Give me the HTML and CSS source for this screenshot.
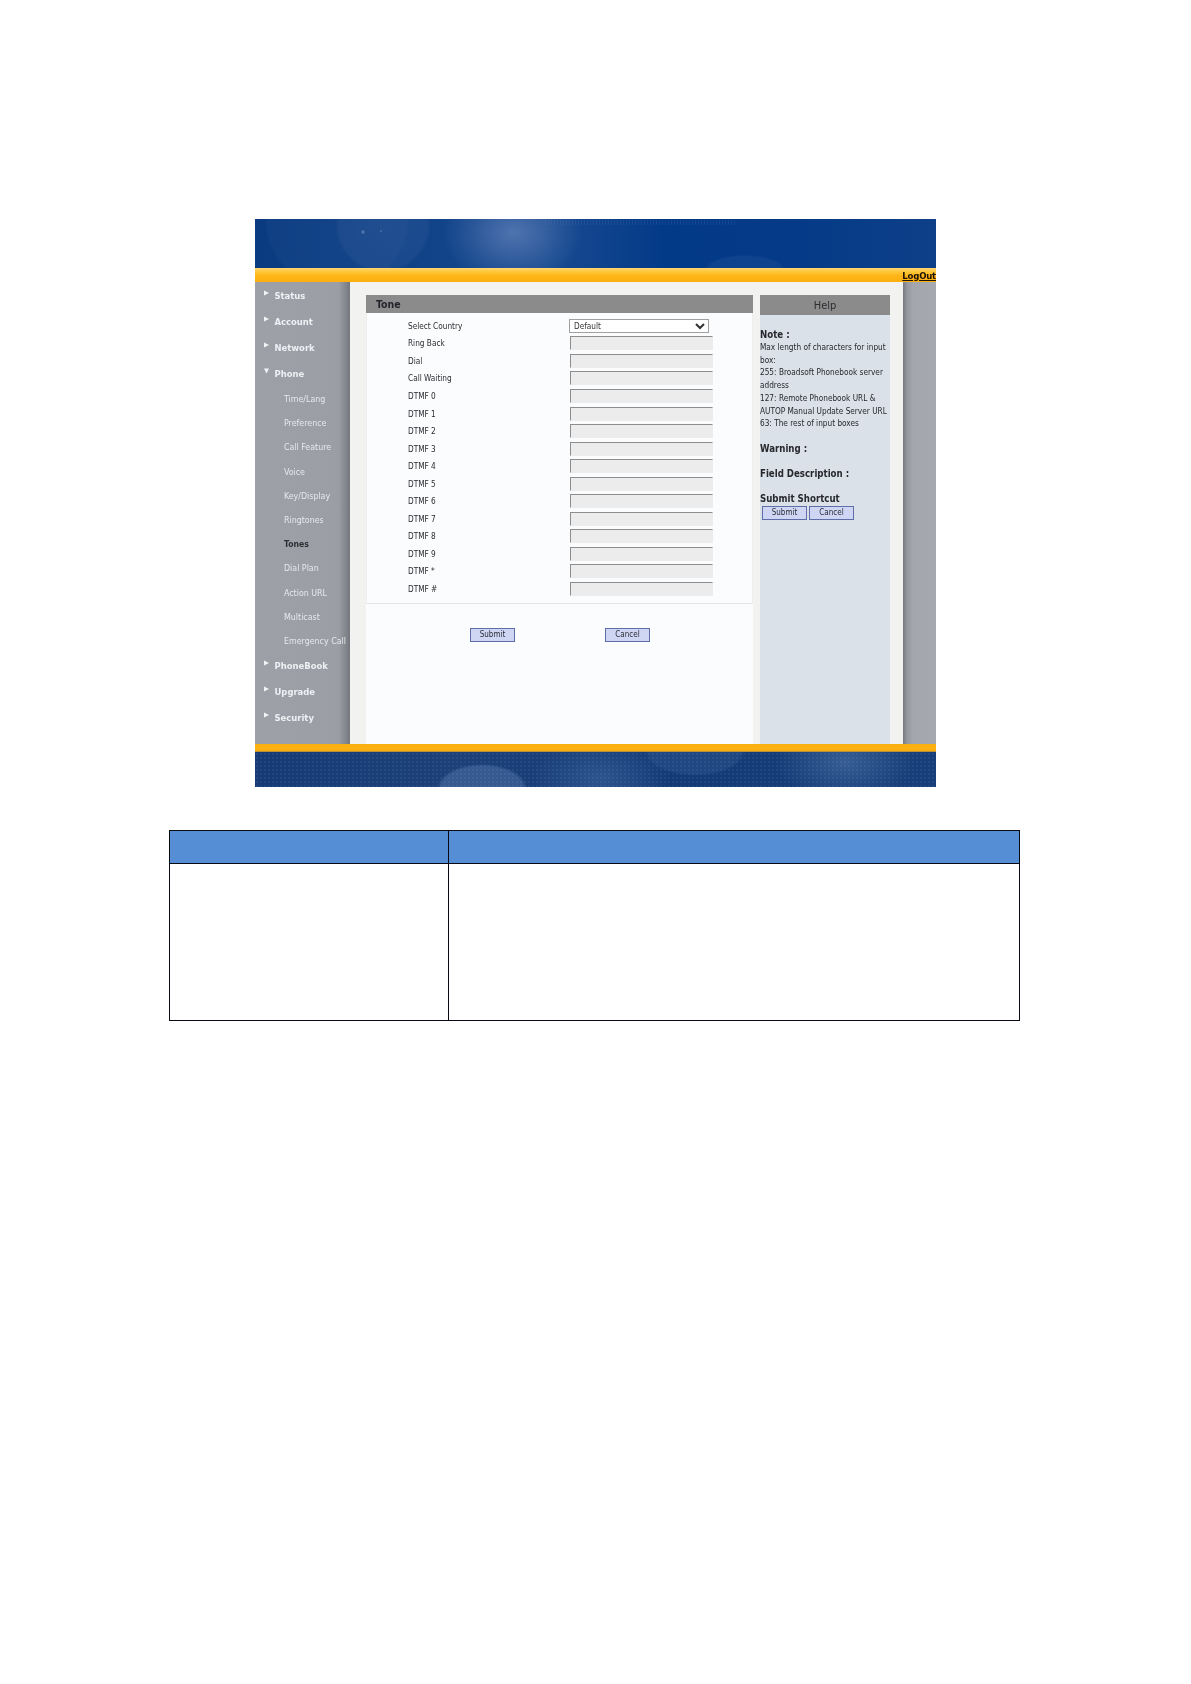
FILE: index.html
```html
<!DOCTYPE html>
<html lang="en">
<head>
<meta charset="utf-8">
<title>Tone</title>
<link rel="stylesheet" href="styles.css">
</head>
<body>
<div class="shot">
  <div class="banner"></div>
  <div class="bar"><a class="logout">LogOut</a></div>
  <div class="main">
    <nav class="side">
      <div class="top"><svg class="tri" viewBox="0 0 6 6"><path d="M0 0L6 3L0 6Z"/></svg>Status</div>
      <div class="top"><svg class="tri" viewBox="0 0 6 6"><path d="M0 0L6 3L0 6Z"/></svg>Account</div>
      <div class="top"><svg class="tri" viewBox="0 0 6 6"><path d="M0 0L6 3L0 6Z"/></svg>Network</div>
      <div class="top"><svg class="tri" viewBox="0 0 6 6"><path d="M0 0L6 0L3 6Z"/></svg>Phone</div>
      <div class="sub">Time/Lang</div>
      <div class="sub">Preference</div>
      <div class="sub">Call Feature</div>
      <div class="sub">Voice</div>
      <div class="sub">Key/Display</div>
      <div class="sub">Ringtones</div>
      <div class="sub current">Tones</div>
      <div class="sub">Dial Plan</div>
      <div class="sub">Action URL</div>
      <div class="sub">Multicast</div>
      <div class="sub">Emergency Call</div>
      <div class="top"><svg class="tri" viewBox="0 0 6 6"><path d="M0 0L6 3L0 6Z"/></svg>PhoneBook</div>
      <div class="top"><svg class="tri" viewBox="0 0 6 6"><path d="M0 0L6 3L0 6Z"/></svg>Upgrade</div>
      <div class="top"><svg class="tri" viewBox="0 0 6 6"><path d="M0 0L6 3L0 6Z"/></svg>Security</div>
    </nav>
    <section class="content">
      <div class="panel">
        <h2 class="title">Tone</h2>
        <div class="rows">
          <div class="row"><span>Select Country</span><select class="sel"><option>Default</option></select></div>
          <div class="row"><span>Ring Back</span><input class="field" readonly></div>
          <div class="row"><span>Dial</span><input class="field" readonly></div>
          <div class="row"><span>Call Waiting</span><input class="field" readonly></div>
          <div class="row"><span>DTMF 0</span><input class="field" readonly></div>
          <div class="row"><span>DTMF 1</span><input class="field" readonly></div>
          <div class="row"><span>DTMF 2</span><input class="field" readonly></div>
          <div class="row"><span>DTMF 3</span><input class="field" readonly></div>
          <div class="row"><span>DTMF 4</span><input class="field" readonly></div>
          <div class="row"><span>DTMF 5</span><input class="field" readonly></div>
          <div class="row"><span>DTMF 6</span><input class="field" readonly></div>
          <div class="row"><span>DTMF 7</span><input class="field" readonly></div>
          <div class="row"><span>DTMF 8</span><input class="field" readonly></div>
          <div class="row"><span>DTMF 9</span><input class="field" readonly></div>
          <div class="row"><span>DTMF *</span><input class="field" readonly></div>
          <div class="row"><span>DTMF #</span><input class="field" readonly></div>
        </div>
        <div class="actions">
          <button class="btn">Submit</button>
          <button class="btn">Cancel</button>
        </div>
      </div>
      <aside class="help">
        <div class="help-title">Help</div>
        <h3 class="note">Note :</h3>
        <p class="note-text">Max length of characters for input<br>box:<br>255: Broadsoft Phonebook server<br>address<br>127: Remote Phonebook URL &amp;<br>AUTOP Manual Update Server URL<br>63: The rest of input boxes</p>
        <h3 class="warn">Warning :</h3>
        <h3 class="desc">Field Description :</h3>
        <h3 class="short">Submit Shortcut</h3>
        <div class="short-btns">
          <button class="btn">Submit</button>
          <button class="btn">Cancel</button>
        </div>
      </aside>
    </section>
    <div class="strip"></div>
  </div>
  <div class="bar-low"></div>
  <div class="foot"></div>
</div>
<table class="tbl">
  <thead><tr><th class="c1"></th><th></th></tr></thead>
  <tbody><tr><td></td><td></td></tr></tbody>
</table>
</body>
</html>
```
FILE: styles.css
```css
* { box-sizing: border-box; }
html, body { margin: 0; background: #fff; }
body { padding-top: 219px; font-family: "DejaVu Sans", sans-serif; color: #222; }

.shot { width: 681px; margin-left: 255px; filter: blur(0.35px); }

.banner {
  height: 49px;
  background:
    radial-gradient(circle 2.5px at 108px 13px, rgba(170,190,225,.5), transparent),
    radial-gradient(circle 1.5px at 126px 12px, rgba(170,190,225,.4), transparent),
    radial-gradient(ellipse 70px 52px at 258px 14px, rgba(125,150,200,.55), rgba(85,120,180,.28) 65%, transparent),
    radial-gradient(circle 48px at 128px 6px, rgba(100,130,180,.16), rgba(100,130,180,.12) 92%, transparent),
    radial-gradient(circle 72px at 82px 0, rgba(70,105,165,.1) 97%, transparent),
    repeating-linear-gradient(90deg, rgba(150,175,220,.1) 0 1px, transparent 1px 3px) 290px 1px / 190px 5px no-repeat,
    radial-gradient(ellipse 40px 14px at 490px 50px, rgba(60,100,160,.2) 90%, transparent),
    linear-gradient(90deg, #0a3a80 0, #0e4086 20%, #1a4b90 42%, #033a88 60%, #043a87 80%, #0e4088 100%);
}

.bar {
  height: 14px;
  display: flex;
  justify-content: flex-end;
  align-items: flex-end;
  background: linear-gradient(#ffd773 0, #ffc536 28%, #fdb414 60%, #fcb010 100%);
}
.logout {
  font-size: 9.5px;
  font-weight: 700;
  line-height: 12px;
  letter-spacing: -.2px;
  color: #1d1206;
  text-decoration: underline;
  font-stretch: condensed;
}

.main { display: flex; height: 462px; }

.side {
  width: 95px;
  flex: none;
  padding-top: 1px;
  background: linear-gradient(90deg, #9da0a6 0, #9b9ea5 88%, #7e8187 97%, #74777d 100%);
  color: #eef0f3;
  font-stretch: condensed;
}
.top {
  position: relative;
  height: 26px;
  padding-left: 19.5px;
  line-height: 26px;
  font-size: 9.4px;
  font-weight: 700;
  white-space: nowrap;
}
.tri {
  position: absolute;
  left: 9px;
  top: 7px;
  width: 5px;
  height: 6px;
  fill: #f2f3f5;
}
.sub {
  height: 24.2px;
  padding-left: 29px;
  line-height: 24.2px;
  font-size: 8.8px;
  white-space: nowrap;
  color: #e6e8ec;
}
.sub.current { color: #2e2f33; font-weight: 700; font-size: 8.6px; }

.content {
  width: 553px;
  flex: none;
  display: flex;
  gap: 7px;
  padding: 13px 13px 0 16px;
  background: #f2f2f0;
}
.panel { width: 387px; flex: none; background: #fbfcfe; }
.title {
  margin: 0;
  height: 18px;
  padding-left: 10px;
  background: #8b8b8b;
  color: #23252b;
  font-size: 10.5px;
  font-weight: 700;
  line-height: 18px;
  font-stretch: condensed;
}
.rows {
  padding: 4px 0 5px;
  border-bottom: 1px solid #e4e5e6;
  border-left: 1px solid #eee;
  border-right: 1px solid #eee;
}
.row {
  display: grid;
  grid-template-columns: 162px 143px;
  align-items: center;
  height: 17.55px;
  padding-left: 41px;
  font-size: 8.2px;
  font-stretch: condensed;
  color: #2a2c30;
}
.sel {
  width: 140px;
  height: 14px;
  margin-left: -1px;
  padding: 0;
  border: 1px solid #a0a0a0;
  border-radius: 0;
  background: #fff;
  font-family: "DejaVu Sans", sans-serif;
  font-size: 8.2px;
  font-stretch: condensed;
  color: #333;
}
.field {
  display: block;
  width: 143px;
  height: 14px;
  padding: 0;
  border: 1px solid #ececec;
  border-top: 1.5px solid #8d8d8d;
  border-left: 1px solid #8d8d8d;
  background: #ececec;
  outline: none;
}
.actions {
  display: flex;
  gap: 90px;
  padding: 24px 0 0 104px;
}
.btn {
  width: 45px;
  height: 14px;
  padding: 0;
  border: 1px solid #5f6ea8;
  border-radius: 0;
  background: #ced6f4;
  font-family: "DejaVu Sans", sans-serif;
  font-size: 8px;
  font-stretch: condensed;
  line-height: 12px;
  color: #2a2c34;
}

.help {
  width: 130px;
  flex: none;
  background: #dae1e8;
  color: #26282d;
  font-stretch: condensed;
}
.help-title {
  height: 20px;
  background: #8b8b8b;
  text-align: center;
  font-size: 11px;
  line-height: 22px;
  color: #2c2d30;
}
.help h3 { margin: 0; font-size: 9.6px; font-weight: 700; line-height: 13px; white-space: nowrap; }
.note { padding-top: 13px; }
.note-text {
  margin: 0;
  font-size: 8.2px;
  line-height: 12.7px;
  white-space: nowrap;
}
.help .warn { padding-top: 12px; }
.help .desc { padding-top: 12px; }
.help .short { padding-top: 12px; }
.short-btns { display: flex; gap: 2px; padding: 1px 0 0 2px; }

.strip {
  flex: 1;
  background: linear-gradient(90deg, #77797e 0, #94979d 12%, #a3a6ac 30%, #a6a9af 100%);
}

.bar-low {
  height: 8px;
  background: linear-gradient(#fdb110 0, #fdb110 80%, #9d8540 100%);
}
.foot {
  height: 35px;
  background:
    radial-gradient(circle 1.5px, rgba(190,210,240,.07) 50%, transparent) 0 0 / 4px 4px,
    radial-gradient(ellipse 45px 24px at 227px 36px, rgba(110,145,195,.32) 90%, transparent),
    radial-gradient(ellipse 50px 24px at 440px 0, rgba(80,115,170,.22) 90%, transparent),
    radial-gradient(ellipse 70px 40px at 345px 26px, rgba(90,130,185,.35), transparent),
    radial-gradient(ellipse 70px 40px at 590px 10px, rgba(110,145,195,.38), transparent),
    linear-gradient(90deg, #163b74 0, #1d4079 30%, #123a75 60%, #173e78 100%);
}

.tbl {
  width: 851px;
  margin: 43px 0 0 169px;
  border-collapse: collapse;
  table-layout: fixed;
}
.tbl th, .tbl td { padding: 0; border: 1.2px solid #0a0a12; }
.tbl th { height: 33px; background: #558ed5; }
.tbl td { height: 157px; background: #fff; }
.tbl .c1 { width: 279px; }
```
